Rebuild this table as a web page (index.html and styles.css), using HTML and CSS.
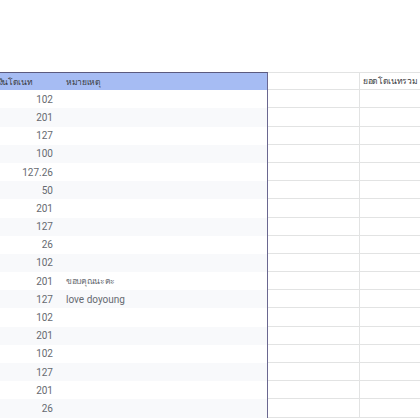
FILE: index.html
```html
<!DOCTYPE html>
<html lang="th">
<head>
<meta charset="utf-8">
<link rel="stylesheet" href="styles.css">
</head>
<body>
<div class="sheet">
  <div class="table">
    <div class="row head"><div class="c1 htext th">ยอดเงินโดเนท</div><div class="c2 th">หมายเหตุ</div></div>
    <div class="row"><div class="c1">102</div><div class="c2"></div></div>
    <div class="row alt"><div class="c1">201</div><div class="c2"></div></div>
    <div class="row"><div class="c1">127</div><div class="c2"></div></div>
    <div class="row alt"><div class="c1">100</div><div class="c2"></div></div>
    <div class="row"><div class="c1">127.26</div><div class="c2"></div></div>
    <div class="row alt"><div class="c1">50</div><div class="c2"></div></div>
    <div class="row"><div class="c1">201</div><div class="c2"></div></div>
    <div class="row alt"><div class="c1">127</div><div class="c2"></div></div>
    <div class="row"><div class="c1">26</div><div class="c2"></div></div>
    <div class="row alt"><div class="c1">102</div><div class="c2"></div></div>
    <div class="row"><div class="c1">201</div><div class="c2 th">ขอบคุณนะคะ</div></div>
    <div class="row alt"><div class="c1">127</div><div class="c2">love doyoung</div></div>
    <div class="row"><div class="c1">102</div><div class="c2"></div></div>
    <div class="row alt"><div class="c1">201</div><div class="c2"></div></div>
    <div class="row"><div class="c1">102</div><div class="c2"></div></div>
    <div class="row alt"><div class="c1">127</div><div class="c2"></div></div>
    <div class="row"><div class="c1">201</div><div class="c2"></div></div>
    <div class="row alt"><div class="c1">26</div><div class="c2"></div></div>
  </div>
  <div class="rest">
    <div class="grow"><div class="c3"></div><div class="c4 th">ยอดโดเนทรวม</div></div>
    <div class="grow"><div class="c3"></div><div class="c4"></div></div>
    <div class="grow"><div class="c3"></div><div class="c4"></div></div>
    <div class="grow"><div class="c3"></div><div class="c4"></div></div>
    <div class="grow"><div class="c3"></div><div class="c4"></div></div>
    <div class="grow"><div class="c3"></div><div class="c4"></div></div>
    <div class="grow"><div class="c3"></div><div class="c4"></div></div>
    <div class="grow"><div class="c3"></div><div class="c4"></div></div>
    <div class="grow"><div class="c3"></div><div class="c4"></div></div>
    <div class="grow"><div class="c3"></div><div class="c4"></div></div>
    <div class="grow"><div class="c3"></div><div class="c4"></div></div>
    <div class="grow"><div class="c3"></div><div class="c4"></div></div>
    <div class="grow"><div class="c3"></div><div class="c4"></div></div>
    <div class="grow"><div class="c3"></div><div class="c4"></div></div>
    <div class="grow"><div class="c3"></div><div class="c4"></div></div>
    <div class="grow"><div class="c3"></div><div class="c4"></div></div>
    <div class="grow"><div class="c3"></div><div class="c4"></div></div>
    <div class="grow"><div class="c3"></div><div class="c4"></div></div>
    <div class="grow"><div class="c3"></div><div class="c4"></div></div>
  </div>
</div>
</body>
</html>
```
FILE: styles.css
```css
html, body {
  margin: 0;
  padding: 0;
  background: #ffffff;
  overflow: hidden;
}
body {
  width: 420px;
  height: 420px;
  font-family: Roboto, "Noto Sans", "Liberation Sans", sans-serif;
  font-size: 10px;
  color: #666a70;
}
.sheet {
  display: flex;
  margin-top: 72px;
  margin-left: -26px;
  width: 520px;
}
.table {
  display: flex;
  flex-direction: column;
  border-top: 1px solid #5b5a7e;
  border-right: 1.5px solid #6a6790;
  width: 293px;
  flex: none;
}
.row {
  display: flex;
  height: 18.2px;
  align-items: center;
  background: #ffffff;
}
.row.alt {
  background: #f8f9fb;
}
.row.head {
  background: #a6bcf3;
  color: #3c4043;
  height: 17.2px;
}
.c1 {
  width: 87px;
  box-sizing: border-box;
  padding-right: 8px;
  text-align: right;
  flex: none;
  white-space: nowrap;
}
.c1.htext {
  text-align: left;
  padding-left: 7px;
}
.c2 {
  flex: 1;
  padding-left: 5px;
  white-space: nowrap;
}
.th {
  font-size: 8.5px;
  letter-spacing: -0.35px;
}
.rest {
  display: flex;
  flex-direction: column;
  border-top: 1px solid #e2e3e3;
  flex: none;
  width: 200px;
}
.grow {
  display: flex;
  height: 18.2px;
  box-sizing: border-box;
  border-bottom: 1px solid #e2e3e3;
  align-items: center;
}
.grow:first-child {
  height: 17.2px;
}
.c3 {
  width: 91px;
  height: 100%;
  border-right: 1px solid #e2e3e3;
  flex: none;
}
.c4 {
  flex: 1;
  padding-left: 3px;
  color: #3c4043;
  white-space: nowrap;
}
```
